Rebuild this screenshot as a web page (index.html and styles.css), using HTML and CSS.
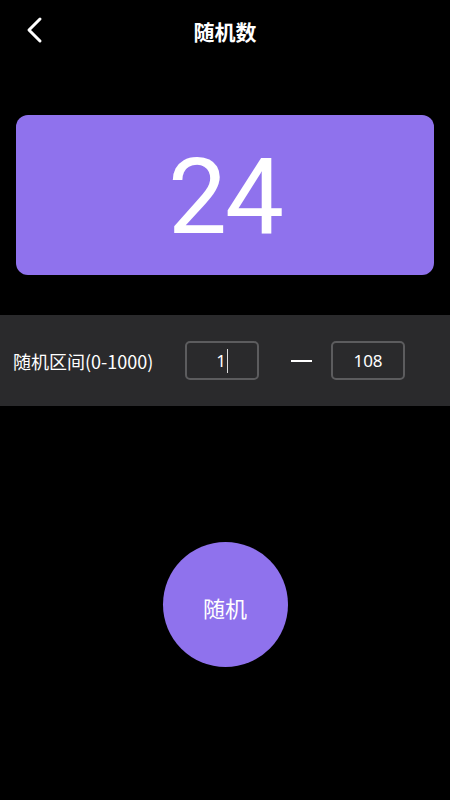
FILE: index.html
```html
<!DOCTYPE html>
<html lang="zh">
<head>
<meta charset="utf-8">
<link rel="stylesheet" href="styles.css">
</head>
<body>
<div class="page">
  <header class="topbar">
    <div class="back">
      <svg width="20" height="28" viewBox="0 0 20 28"><path d="M15 3 L4 14 L15 25" fill="none" stroke="#fff" stroke-width="3" stroke-linecap="round" stroke-linejoin="round"/></svg>
    </div>
    <h1 class="title">随机数</h1>
  </header>
  <section class="result">
    <span class="num">24</span>
  </section>
  <section class="range">
    <span class="label">随机区间(0-1000)</span>
    <div class="inputs">
      <div class="box"><span>1</span><span class="caret"></span></div>
      <span class="dash"></span>
      <div class="box"><span>108</span></div>
    </div>
  </section>
  <div class="action">
    <button class="go">随机</button>
  </div>
</div>
</body>
</html>
```
FILE: styles.css
```css
html, body {
  margin: 0;
  padding: 0;
  background: #000;
}
body {
  font-family: "Noto Sans CJK SC", "Noto Sans", sans-serif;
  color: #fff;
}
.page {
  width: 450px;
  height: 800px;
  display: flex;
  flex-direction: column;
}
.topbar {
  height: 62px;
  display: flex;
  align-items: center;
  justify-content: center;
  position: relative;
}
.back {
  position: absolute;
  left: 25px;
  top: 16px;
  width: 20px;
  height: 28px;
}
.title {
  margin: 0;
  font-size: 21px;
  font-weight: 700;
  line-height: 1;
}
.result {
  margin: 53px 16px 0;
  height: 160px;
  border-radius: 12px;
  background: #8f72ed;
  display: flex;
  align-items: center;
  justify-content: center;
}
.num {
  font-family: Roboto, sans-serif;
  font-size: 105px;
  font-weight: 400;
  line-height: 1;
  letter-spacing: -2px;
  padding-top: 4px;
}
.range {
  margin-top: 40px;
  height: 91px;
  background: #2a2a2c;
  display: flex;
  align-items: center;
  padding-left: 13px;
}
.label {
  font-size: 18px;
  width: 172px;
}
.inputs {
  display: flex;
  align-items: center;
}
.box {
  width: 70px;
  height: 35px;
  border: 2px solid #5c5c5e;
  border-radius: 5px;
  display: flex;
  align-items: center;
  justify-content: center;
  font-family: "Noto Sans", sans-serif;
  font-size: 17px;
}
.caret {
  display: inline-block;
  width: 1px;
  height: 24px;
  background: #ddd;
  margin-left: 1px;
}
.dash {
  width: 21px;
  height: 2px;
  background: #fff;
  margin: 0 19px 0 32px;
}
.action {
  display: flex;
  justify-content: center;
  margin-top: 136px;
}
.go {
  width: 125px;
  height: 125px;
  border-radius: 50%;
  border: none;
  background: #8f72ed;
  color: #fff;
  font-family: "Noto Sans CJK SC", sans-serif;
  font-size: 22px;
  padding: 5px 0 0;
}
```
